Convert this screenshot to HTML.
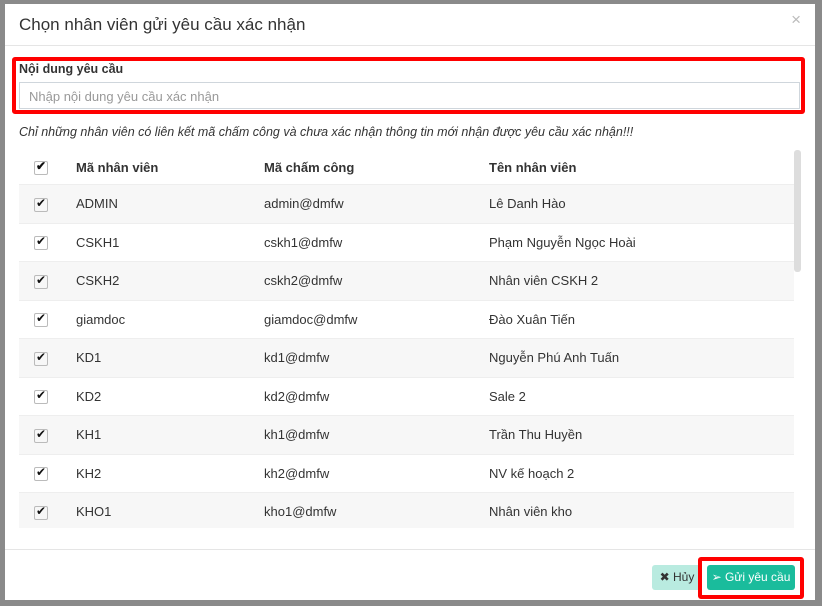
<!DOCTYPE html>
<html><head><meta charset="utf-8"><style>
body{margin:0;width:822px;height:606px;background:#8a8a8a;font-family:"Liberation Sans",sans-serif;position:relative;overflow:hidden;font-size:13px;color:#333}
.modal{position:absolute;left:5px;top:4px;width:810px;height:596px;background:#fff}
.hd{position:absolute;left:0;top:0;width:810px;height:41px;border-bottom:1px solid #e5e5e5}
.hd h4{margin:0;position:absolute;left:14px;top:11px;font-size:17px;font-weight:normal;color:#333}
.x{position:absolute;right:14px;top:6px;font-size:17px;color:#bbb}
.red{position:absolute;border:4px solid #f00;border-radius:3px;box-sizing:border-box}
.lab{position:absolute;left:14px;top:58px;font-size:12.5px;font-weight:bold;color:#333}
.inp{position:absolute;left:14px;top:78px;width:781px;height:27px;border:1px solid #cfd6dc;box-sizing:border-box;font-size:13px;color:#999;padding:6px 9px}
.note{position:absolute;left:14px;top:121px;font-style:italic;font-size:12.5px;color:#333}
.wrap{position:absolute;left:14px;top:146px;width:775px;height:378px;overflow:hidden}
table{width:775px;border-collapse:collapse}
td,th{height:37.5px;padding:0;text-align:left;font-size:13px;color:#333}
th{height:34px;font-weight:bold}
tr.o td{background:#f7f7f7}
tbody tr td{border-top:1px solid #eee}
.cb{display:inline-block;width:12px;height:12px;border:1px solid #bbb;border-radius:2px;margin-left:15px;position:relative;vertical-align:middle}
.cb:after{content:"✔";position:absolute;left:1px;top:-3px;font-size:12px;color:#111}
.sb{position:absolute;left:789px;top:146px;width:7px;height:122px;background:#ddd;border-radius:3px}
.ft{position:absolute;left:0;top:545px;width:810px;border-top:1px solid #e5e5e5}
.btn{position:absolute;top:561px;height:25px;border-radius:3px;font-size:12px;line-height:25px;text-align:center}
</style></head><body>
<div class="modal">
<div class="hd"><h4>Chọn nhân viên gửi yêu cầu xác nhận</h4><span class="x">×</span></div>
<div class="lab">Nội dung yêu cầu</div>
<div class="inp">Nhập nội dung yêu cầu xác nhận</div>
<div class="note">Chỉ những nhân viên có liên kết mã chấm công và chưa xác nhận thông tin mới nhận được yêu cầu xác nhận!!!</div>
<div class="wrap"><table>
<colgroup><col style="width:57px"><col style="width:188px"><col style="width:225px"><col></colgroup>
<thead><tr><th><span class="cb"></span></th><th>Mã nhân viên</th><th>Mã chấm công</th><th>Tên nhân viên</th></tr></thead>
<tbody>
<tr class="o"><td><span class="cb"></span></td><td>ADMIN</td><td>admin@dmfw</td><td>Lê Danh Hào</td></tr>
<tr><td><span class="cb"></span></td><td>CSKH1</td><td>cskh1@dmfw</td><td>Phạm Nguyễn Ngọc Hoài</td></tr>
<tr class="o"><td><span class="cb"></span></td><td>CSKH2</td><td>cskh2@dmfw</td><td>Nhân viên CSKH 2</td></tr>
<tr><td><span class="cb"></span></td><td>giamdoc</td><td>giamdoc@dmfw</td><td>Đào Xuân Tiến</td></tr>
<tr class="o"><td><span class="cb"></span></td><td>KD1</td><td>kd1@dmfw</td><td>Nguyễn Phú Anh Tuấn</td></tr>
<tr><td><span class="cb"></span></td><td>KD2</td><td>kd2@dmfw</td><td>Sale 2</td></tr>
<tr class="o"><td><span class="cb"></span></td><td>KH1</td><td>kh1@dmfw</td><td>Trần Thu Huyền</td></tr>
<tr><td><span class="cb"></span></td><td>KH2</td><td>kh2@dmfw</td><td>NV kế hoạch 2</td></tr>
<tr class="o"><td><span class="cb"></span></td><td>KHO1</td><td>kho1@dmfw</td><td>Nhân viên kho</td></tr>
<tr><td><span class="cb"></span></td><td>KHO2</td><td>kho2@dmfw</td><td>Nhân viên kho 2</td></tr>
</tbody></table></div>
<div class="sb"></div>
<div class="ft"></div>
<div class="btn" style="left:647px;width:50px;background:#b9ebe0;color:#333">✖ Hủy</div>
<div class="btn" style="left:702px;width:88px;background:#1abc9c;color:#fff">➢ Gửi yêu cầu</div>
</div>
<div class="red" style="left:12px;top:57px;width:793px;height:57px"></div>
<div class="red" style="left:698px;top:557px;width:106px;height:42px"></div>
</body></html>
